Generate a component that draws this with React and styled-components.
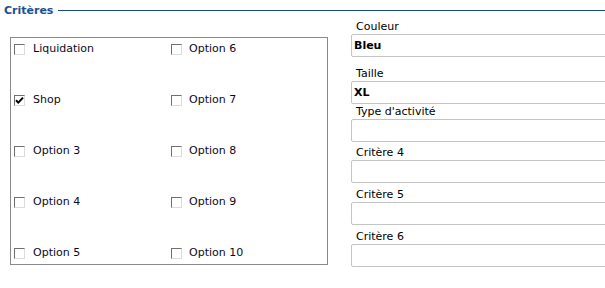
import React from "react";
import styled, { createGlobalStyle } from "styled-components";

const Global = createGlobalStyle`
  html, body { margin: 0; padding: 0; background: #fff; overflow: hidden; }
  body { font-family: "DejaVu Sans", Verdana, sans-serif; font-size: 11px; color: #000; }
  * { box-sizing: border-box; }
`;

const Page = styled.div`
  width: 605px;
  height: 288px;
  overflow: hidden;
`;

const Header = styled.div`
  display: flex;
  align-items: center;
  height: 20px;
  padding-left: 4px;
`;

const Legend = styled.span`
  font-weight: bold;
  font-size: 11px;
  line-height: 13px;
  color: #1d4f8f;
`;

const Rule = styled.div`
  flex: 1;
  height: 1px;
  margin-left: 5px;
  margin-top: 1px;
  background: #174a88;
`;

const Body = styled.div`
  display: flex;
  align-items: flex-start;
  padding-left: 10px;
`;

const OptionsBox = styled.div`
  flex: none;
  width: 318px;
  height: 228px;
  margin-top: 17px;
  border: 1px solid #8a8a8a;
  padding: 4px 0 0 3px;
  display: grid;
  grid-template-columns: 157px 157px;
  grid-template-rows: repeat(5, 14px);
  grid-auto-flow: column;
  row-gap: 37px;
`;

const Option = styled.label`
  display: flex;
  align-items: center;
  gap: ${(p) => p.$gap}px;
  line-height: 14px;
  color: #0a0a1e;
`;

const Box = styled.span`
  width: 11px;
  height: 11px;
  flex: none;
  border-top: 1px solid #707070;
  border-left: 1px solid #707070;
  border-right: 1px solid #dcdcdc;
  border-bottom: 1px solid #dcdcdc;
  background: #fff;
  display: flex;
  align-items: center;
  justify-content: center;
`;

const RightCol = styled.div`
  flex: none;
  margin-left: 23px;
  width: 270px;
  display: flex;
  flex-direction: column;
`;

const Field = styled.div`
  margin-top: ${(p) => p.$mt}px;
  display: flex;
  flex-direction: column;
`;

const FieldLabel = styled.div`
  line-height: 13px;
  padding-left: 5px;
  margin-bottom: 1px;
`;

const Input = styled.div`
  height: 23px;
  border: 1px solid #c4c4c4;
  border-radius: 2px;
  padding: 0 2px;
  display: flex;
  align-items: center;
  font-weight: bold;
  background: #fff;
`;

const Check = ({ checked }) => (
  <Box>
    {checked && (
      <svg width="9" height="9" viewBox="0 0 9 9">
        <path d="M1 4.2 L3.3 6.6 L8 1.6" fill="none" stroke="#000" strokeWidth="2" />
      </svg>
    )}
  </Box>
);

const options = [
  { label: "Liquidation", gap: 8 },
  { label: "Shop", gap: 8, checked: true },
  { label: "Option 3", gap: 8 },
  { label: "Option 4", gap: 8 },
  { label: "Option 5", gap: 8 },
  { label: "Option 6", gap: 7 },
  { label: "Option 7", gap: 7 },
  { label: "Option 8", gap: 7 },
  { label: "Option 9", gap: 7 },
  { label: "Option 10", gap: 7 },
];

const fields = [
  { label: "Couleur", value: "Bleu", mt: 0 },
  { label: "Taille", value: "XL", mt: 10 },
  { label: "Type d'activité", value: "", mt: 1 },
  { label: "Critère 4", value: "", mt: 4 },
  { label: "Critère 5", value: "", mt: 5 },
  { label: "Critère 6", value: "", mt: 5 },
];

export default function App() {
  return (
    <Page>
      <Global />
      <Header>
        <Legend>Critères</Legend>
        <Rule />
      </Header>
      <Body>
        <OptionsBox>
          {options.map((o) => (
            <Option key={o.label} $gap={o.gap}>
              <Check checked={o.checked} />
              <span>{o.label}</span>
            </Option>
          ))}
        </OptionsBox>
        <RightCol>
          {fields.map((f) => (
            <Field key={f.label} $mt={f.mt}>
              <FieldLabel>{f.label}</FieldLabel>
              <Input>{f.value}</Input>
            </Field>
          ))}
        </RightCol>
      </Body>
    </Page>
  );
}
